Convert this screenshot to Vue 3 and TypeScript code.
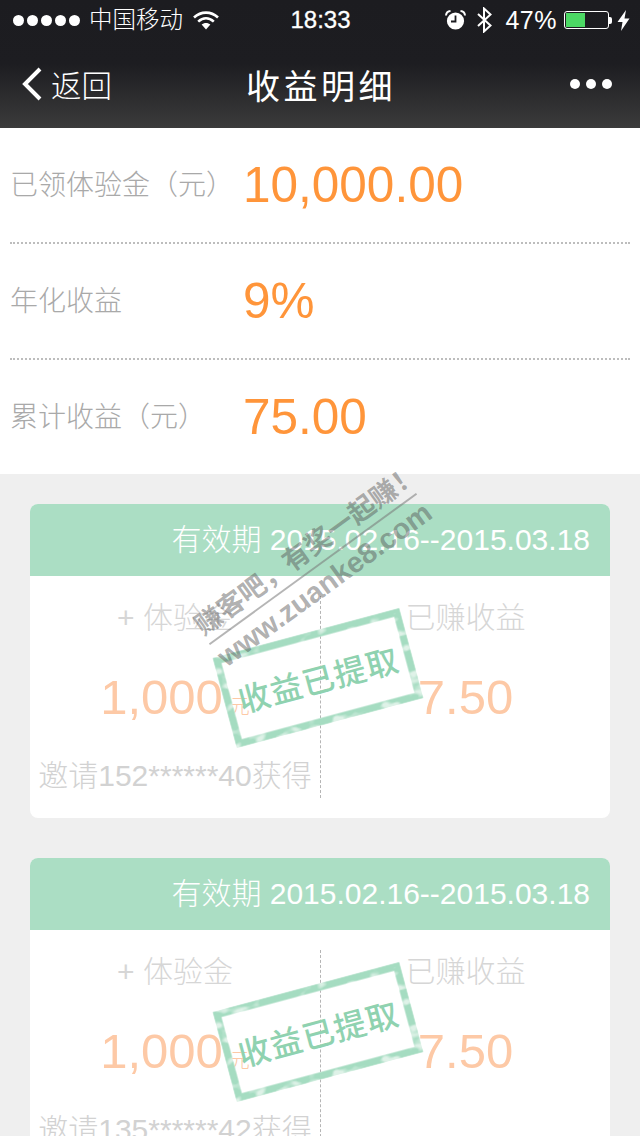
<script setup lang="ts">
interface Row { label: string; value: string }
interface Card { phone: string }
const rows: Row[] = [
  { label: '已领体验金（元）', value: '10,000.00' },
  { label: '年化收益', value: '9%' },
  { label: '累计收益（元）', value: '75.00' },
]
const cards: Card[] = [{ phone: '邀请152******40获得' }, { phone: '邀请135******42获得' }]
</script>

<template>
  <div class="page">
    <svg class="defs" width="0" height="0">
      <filter id="mottle" x="-5%" y="-5%" width="110%" height="110%">
        <feTurbulence type="fractalNoise" baseFrequency="0.06 0.1" numOctaves="2" seed="7" result="n" />
        <feColorMatrix in="n" type="matrix" values="0 0 0 0 0  0 0 0 0 0  0 0 0 0 0  0 0 0 -5 3.6" result="a" />
        <feComposite in="SourceGraphic" in2="a" operator="in" />
      </filter>
    </svg>
    <header class="top">
      <div class="status">
        <div class="st-left">
          <span class="dots"><i v-for="n in 5" :key="n"></i></span>
          <span class="carrier">中国移动</span>
          <svg class="wifi" width="26" height="19" viewBox="0 0 26 19">
            <path d="M1 6.5C8 0 18 0 25 6.5" fill="none" stroke="#fff" stroke-width="2.6" />
            <path d="M5.2 10.6C10 6.3 16 6.3 20.8 10.6" fill="none" stroke="#fff" stroke-width="2.6" />
            <path d="M8.6 13.6C11 11.4 15 11.4 17.4 13.6L13 18.5Z" fill="#fff" />
          </svg>
        </div>
        <div class="time">18:33</div>
        <div class="st-right">
          <svg class="alarm" width="21" height="20" viewBox="0 0 21 20">
            <circle cx="10.5" cy="11" r="8.6" fill="#fff" />
            <path d="M10.5 5.5V11.5H6" fill="none" stroke="#1c1c20" stroke-width="1.8" />
            <path d="M1 5.5C1.2 3 3 1.2 5.5 1M20 5.5C19.8 3 18 1.2 15.5 1" fill="none" stroke="#fff" stroke-width="2" />
          </svg>
          <svg class="bt" width="17" height="26" viewBox="0 0 17 26">
            <path d="M2 7L14.5 18.5L8 24.5V1.5L14.5 7.5L2 19" fill="none" stroke="#fff" stroke-width="2" />
          </svg>
          <span class="pct">47%</span>
          <span class="battery"><span class="fill"></span></span>
          <span class="nub"></span>
          <svg class="bolt" width="13" height="21" viewBox="0 0 13 21">
            <path d="M9 0L0.5 12H5.5L4 21L12.5 8.5H7.5Z" fill="#fff" />
          </svg>
        </div>
      </div>
      <nav class="nav">
        <div class="back">
          <svg width="22" height="34" viewBox="0 0 22 34">
            <path d="M19 2L4 17L19 32" fill="none" stroke="#fff" stroke-width="4" />
          </svg>
          <span>返回</span>
        </div>
        <div class="title">收益明细</div>
        <div class="more"><i></i><i></i><i></i></div>
      </nav>
    </header>

    <section class="summary">
      <div v-for="r in rows" :key="r.label" class="row">
        <span class="row-label">{{ r.label }}</span>
        <span class="row-value">{{ r.value }}</span>
      </div>
    </section>

    <section class="list">
      <article v-for="c in cards" :key="c.phone" class="card">
        <div class="card-head"><span class="cn">有效期</span> 2015.02.16--2015.03.18</div>
        <div class="card-body">
          <div class="col">
            <div class="c-label">+ 体验金</div>
            <div class="c-num">1,000<small>元</small></div>
            <div class="c-note">{{ c.phone }}</div>
          </div>
          <div class="col col-r">
            <div class="c-label">已赚收益</div>
            <div class="c-num">7.50</div>
          </div>
        </div>
        <div class="stamp">
          <svg class="stamp-border" width="194" height="94" viewBox="0 0 194 94">
            <rect x="4" y="4" width="186" height="86" fill="none" stroke="#dff2e8" stroke-width="7" />
            <rect x="4" y="4" width="186" height="86" fill="none" stroke="#a5dcc1" stroke-width="7" filter="url(#mottle)" />
          </svg>
          <span class="stamp-text">收益已提取</span>
        </div>
      </article>
    </section>

    <div class="wm">
      <div class="wm-cn">赚客吧，有奖一起赚！</div>
      <div class="wm-en">www.zuanke8.com</div>
    </div>
  </div>
</template>

<style>
html, body { margin: 0; background: #efefef; }
</style>

<style scoped>
.page {
  position: relative;
  width: 640px;
  height: 1136px;
  overflow: hidden;
  background: #efefef;
  font-family: "Liberation Sans", "Noto Sans CJK SC", sans-serif;
}
.defs { position: absolute; }
.top {
  height: 128px;
  color: #fff;
  background: linear-gradient(180deg, #1c1c20 0%, #1d1d21 50%, #3b3b3b 100%);
}
.status {
  height: 40px;
  display: grid;
  grid-template-columns: 1fr auto 1fr;
  align-items: center;
  padding: 0 10px 0 13px;
}
.st-left, .st-right { display: flex; align-items: center; }
.st-right { justify-content: flex-end; }
.dots { display: flex; gap: 3px; }
.dots i { width: 11px; height: 11px; border-radius: 50%; background: #fff; }
.carrier { margin-left: 9px; font-size: 23.5px; font-weight: 300; line-height: 40px; }
.wifi { margin-left: 10px; }
.time { font-size: 24px; font-weight: 400; -webkit-text-stroke: 0.3px #fff; margin-right: 2px; }
.bt { margin-left: 10px; }
.pct { margin-left: 12px; font-size: 25px; letter-spacing: 0.5px; }
.battery {
  margin-left: 7px;
  width: 45px;
  height: 18px;
  box-sizing: border-box;
  border: 1px solid #fff;
  border-radius: 3px;
  padding: 1px;
  display: flex;
}
.fill { width: 19px; background: #4cd964; }
.nub { width: 3px; height: 7px; background: #fff; border-radius: 0 2px 2px 0; }
.bolt { margin-left: 5px; }
.nav {
  height: 88px;
  display: grid;
  grid-template-columns: 1fr auto 1fr;
  align-items: center;
  padding: 0 28px 2px 21px;
}
.back { display: flex; align-items: center; gap: 8px; font-size: 30.5px; font-weight: 300; }
.title { font-size: 34px; letter-spacing: 3.5px; font-weight: 400; margin-left: 9px; }
.more { display: flex; justify-content: flex-end; gap: 6px; }
.more i { width: 10px; height: 10px; border-radius: 50%; background: #fff; }

.summary { background: #fff; padding: 0 10px; height: 346px; }
.row {
  height: 116px;
  box-sizing: border-box;
  display: flex;
  align-items: center;
  border-bottom: 2px dotted #bdbdbd;
}
.row:last-child { border-bottom: 0; height: 114px; }
.row-label {
  width: 233px;
  flex: none;
  margin-bottom: 4px;
  font-size: 28px;
  color: #a9a9a9;
  font-weight: 300;
  white-space: nowrap;
}
.row-value { font-size: 49.5px; color: #ff953a; line-height: 1; }

.list {
  padding: 30px 30px 0;
  display: flex;
  flex-direction: column;
  gap: 40px;
}
.card {
  position: relative;
  height: 314px;
  flex: none;
  background: #fff;
  border-radius: 8px;
}
.card-head {
  height: 72px;
  line-height: 72px;
  border-radius: 8px 8px 0 0;
  background: #abdec4;
  color: #fff;
  font-size: 30px;
  text-align: right;
  padding-right: 20px;
  white-space: nowrap;
}
.cn { font-weight: 300; }
.card-body {
  display: grid;
  grid-template-columns: 290px 290px;
  height: 242px;
  box-sizing: border-box;
  padding: 20px 0;
}
.col { text-align: center; white-space: nowrap; height: 202px; }
.col-r { border-left: 1px dashed #b5b5b5; box-sizing: border-box; }
.c-label { font-size: 30px; line-height: 44px; color: #d6d6d6; font-weight: 300; }
.c-num { font-size: 49px; line-height: 60px; margin-top: 27px; color: #fdc9a6; }
.c-num small { font-size: 20px; margin-left: 7px; font-weight: 300; line-height: 1; }
.c-note { font-size: 30px; line-height: 40px; margin-top: 29px; color: #d2d2d2; font-weight: 300; }
.stamp {
  position: absolute;
  left: 191px;
  top: 127px;
  width: 194px;
  height: 94px;
  transform: rotate(-15deg);
  display: flex;
  align-items: center;
  justify-content: center;
}
.stamp-border { position: absolute; inset: 0; }
.stamp-text {
  position: relative;
  font-size: 32px;
  letter-spacing: 1px;
  color: #8fd2b0;
  font-weight: 500;
  white-space: nowrap;
}
.wm {
  position: absolute;
  left: 185px;
  top: 532px;
  width: 256px;
  transform: rotate(-36deg);
  transform-origin: 50% 50%;
  color: rgba(80, 80, 80, 0.45);
  text-align: center;
  white-space: nowrap;
}
.wm-cn {
  font-size: 27px;
  line-height: 36px;
  font-weight: 700;
  border-bottom: 2px solid rgba(120, 120, 120, 0.55);
}
.wm-en { font-size: 29px; line-height: 36px; font-weight: 700; }
</style>
